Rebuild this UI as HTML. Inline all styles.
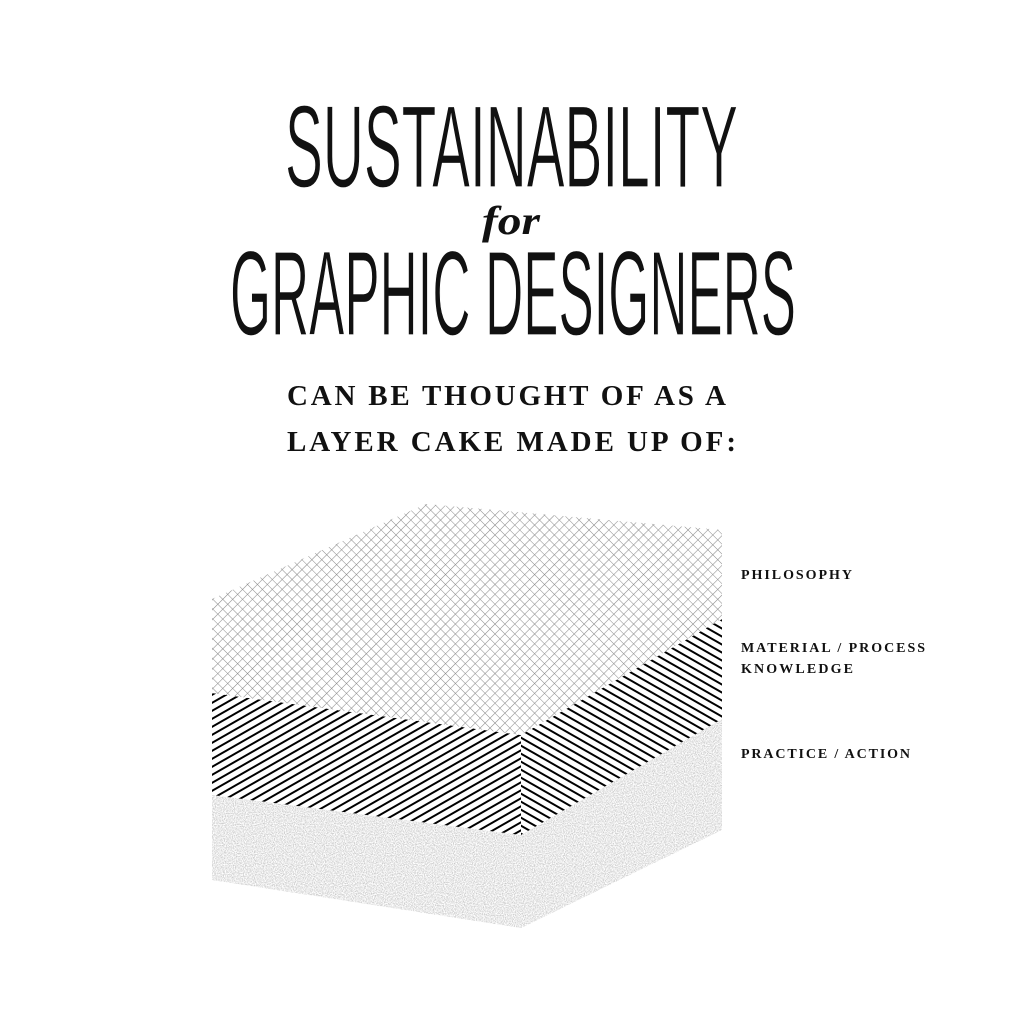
<!DOCTYPE html>
<html><head><meta charset="utf-8"><style>html,body{margin:0;padding:0;background:#fff}svg{display:block}</style></head>
<body>
<svg width="1024" height="1024" viewBox="0 0 1024 1024" xmlns="http://www.w3.org/2000/svg">
<defs>
<pattern id="xh" width="7" height="7" patternUnits="userSpaceOnUse" patternTransform="rotate(45)">
<rect width="7" height="7" fill="#fff"/>
<path d="M0 0H7M0 0V7" stroke="#8a8a8a" stroke-width="1.1"/>
</pattern>
<pattern id="sl" width="14" height="8" patternUnits="userSpaceOnUse">
<rect width="14" height="8" fill="#fff"/>
<path d="M0 8L14 0M-7 4L7 -4M7 12L21 4" stroke="#000" stroke-width="2"/>
</pattern>
<pattern id="sr" width="14" height="8" patternUnits="userSpaceOnUse">
<rect width="14" height="8" fill="#fff"/>
<path d="M0 0L14 8M-7 4L7 12M7 -4L21 4" stroke="#000" stroke-width="2"/>
</pattern>
<filter id="noise" x="0" y="0" width="100%" height="100%">
<feTurbulence type="fractalNoise" baseFrequency="0.9" numOctaves="2" seed="3"/>
<feColorMatrix type="matrix" values="0 0 0 0 0.55  0 0 0 0 0.55  0 0 0 0 0.55  0 0 0 -2.2 1.45"/>
<feComposite in2="SourceGraphic" operator="in"/>
</filter>
</defs>

<g font-family="'Liberation Sans Narrow','Liberation Sans',sans-serif" fill="#111" font-weight="normal" stroke="#fff" stroke-width="1.2">
<text x="285" y="187" font-size="117" textLength="453" lengthAdjust="spacingAndGlyphs">SUSTAINABILITY</text>
<text x="230" y="335" font-size="121" textLength="566" lengthAdjust="spacingAndGlyphs">GRAPHIC DESIGNERS</text>
</g>
<text x="482" y="234" font-family="'Liberation Serif',serif" font-style="italic" font-weight="bold" font-size="40" textLength="58" lengthAdjust="spacingAndGlyphs" fill="#111">for</text>

<g font-family="'Liberation Serif',serif" font-weight="bold" fill="#111">
<text x="287" y="405" font-size="29" textLength="439" lengthAdjust="spacing">CAN BE THOUGHT OF AS A</text>
<text x="287" y="451" font-size="29" textLength="449" lengthAdjust="spacing">LAYER CAKE MADE UP OF:</text>
<g font-size="14">
<text x="741" y="579" textLength="111" lengthAdjust="spacing">PHILOSOPHY</text>
<text x="741" y="652" textLength="184" lengthAdjust="spacing">MATERIAL / PROCESS</text>
<text x="741" y="673" textLength="112" lengthAdjust="spacing">KNOWLEDGE</text>
<text x="741" y="758" textLength="169" lengthAdjust="spacing">PRACTICE / ACTION</text>
</g>
</g>

<polygon points="212,795 521,835 722,719 722,830 521,928 212,880" fill="#fff" filter="url(#noise)"/>
<polygon points="212,693 521,735 521,835 212,795" fill="url(#sl)"/>
<polygon points="521,735 722,619 722,719 521,835" fill="url(#sr)"/>
<polygon points="212,599 426,504 722,530 722,619 521,735 212,693" fill="url(#xh)"/>
</svg>
</body></html>
